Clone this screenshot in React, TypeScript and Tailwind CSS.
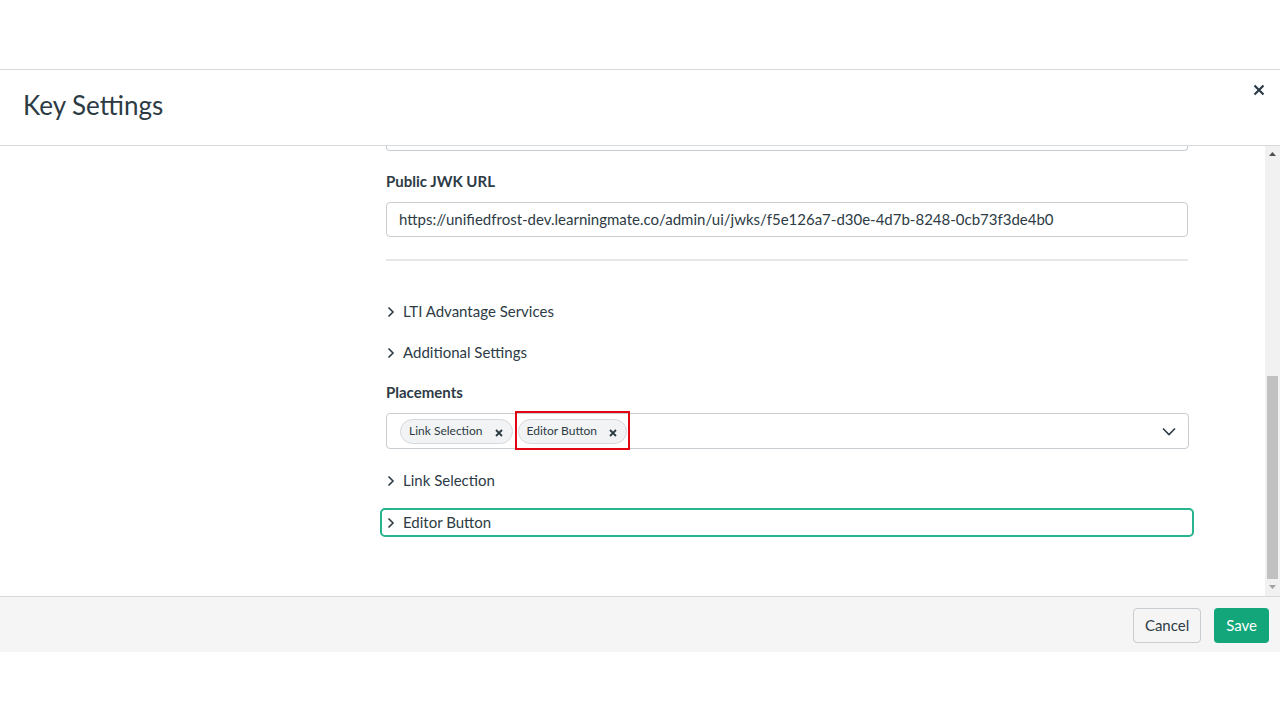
import { ReactNode } from 'react'

// Small right-pointing chevron used by the collapsible rows
function ChevronRight() {
  return (
    <svg width="8" height="12" viewBox="0 0 8 12" className="shrink-0" aria-hidden="true">
      <path d="M1.5 1.5 L6 6 L1.5 10.5" fill="none" stroke="#2d3b45" strokeWidth="1.6" />
    </svg>
  )
}

function ChipX() {
  return (
    <svg width="8" height="8" viewBox="0 0 8 8" aria-hidden="true">
      <path d="M1 1 L7 7 M7 1 L1 7" stroke="#2d3b45" strokeWidth="1.8" />
    </svg>
  )
}

function Chip({ label }: { label: string }) {
  return (
    <span className="flex h-[25px] items-center gap-[12px] rounded-full border border-[#d5d9dc] bg-[#f2f3f4] pl-[8px] pr-[9px] text-[12px] text-[#2d3b45]">
      {label}
      <span className="mt-[3px]">
        <ChipX />
      </span>
    </span>
  )
}

function Toggle({ label, focused }: { label: string; focused?: boolean }) {
  return (
    <div
      className={
        focused
          ? '-mx-[6px] flex h-[29px] items-center gap-[8px] rounded-[5px] border-2 border-[#27b48e] px-[5px] text-[15px] text-[#2d3b45]'
          : 'flex h-[29px] items-center gap-[8px] px-px text-[15px] text-[#2d3b45]'
      }
    >
      <ChevronRight />
      {label}
    </div>
  )
}

function Label({ children }: { children: ReactNode }) {
  return <div className="text-[15px] font-bold leading-[20px] text-[#2d3b45]">{children}</div>
}

export default function App() {
  return (
    <div className="flex h-[720px] w-[1280px] flex-col bg-white font-['Lato',sans-serif] text-[#2d3b45]">
      <div className="h-[69px] shrink-0" />

      {/* Modal header */}
      <div className="flex h-[77px] shrink-0 items-start justify-between border-y border-[#d7dadc]">
        <h1 className="ml-[23px] mt-[19px] text-[26px] leading-[32px] text-[#2d3b45]">Key Settings</h1>
        <button className="mr-[15px] mt-[14px]" aria-label="Close">
          <svg width="12" height="12" viewBox="0 0 12 12">
            <path d="M1.5 1.5 L10.5 10.5 M10.5 1.5 L1.5 10.5" stroke="#2d3b45" strokeWidth="2.2" />
          </svg>
        </button>
      </div>

      {/* Scrolling body */}
      <div className="flex h-[450px] shrink-0">
        <div className="flex-1 overflow-hidden">
          <div className="ml-[386px] w-[802px]">
            <div className="h-[5px] rounded-b-[4px] border-x border-b border-[#c7cdd1]" />

            <div className="mt-[20px]">
              <Label>Public JWK URL</Label>
            </div>
            <div className="mt-[11px] flex h-[35px] items-center rounded-[4px] border border-[#c7cdd1] px-[12px] text-[15px]">
              https://unifiedfrost-dev.learningmate.co/admin/ui/jwks/f5e126a7-d30e-4d7b-8248-0cb73f3de4b0
            </div>

            <div className="mt-[22px] h-[2px] bg-[#e5e7e9]" />

            <div className="mt-[36px] flex flex-col gap-[12px]">
              <Toggle label="LTI Advantage Services" />
              <Toggle label="Additional Settings" />
            </div>

            <div className="mt-[15px]">
              <Label>Placements</Label>
            </div>
            <div className="mt-[11px] flex h-[36px] w-[803px] items-center rounded-[4px] border border-[#c7cdd1] pl-[13px] pr-[12px]">
              <div className="flex items-center gap-[5px]">
                <Chip label="Link Selection" />
                <div className="relative">
                  <Chip label="Editor Button" />
                  <div className="absolute -bottom-[6px] -left-[3px] -right-[3px] -top-[8px] border-2 border-[#e30613]" />
                </div>
              </div>
              <svg width="14" height="9" viewBox="0 0 14 9" className="ml-auto" aria-hidden="true">
                <path d="M1 1.5 L7 7.5 L13 1.5" fill="none" stroke="#2d3b45" strokeWidth="1.6" />
              </svg>
            </div>

            <div className="mt-[17px] flex flex-col gap-[13px]">
              <Toggle label="Link Selection" />
              <Toggle label="Editor Button" focused />
            </div>
          </div>
        </div>

        {/* Scrollbar */}
        <div className="flex w-[15px] shrink-0 flex-col bg-[#f1f1f1]">
          <div className="flex h-[15px] items-center justify-center">
            <svg width="7" height="4" viewBox="0 0 7 4">
              <path d="M0 4 L3.5 0 L7 4 Z" fill="#505050" />
            </svg>
          </div>
          <div className="mx-[2px] mt-[215px] h-[203px] bg-[#c1c1c1]" />
          <div className="flex h-[15px] items-center justify-center">
            <svg width="7" height="4" viewBox="0 0 7 4">
              <path d="M0 0 L3.5 4 L7 0 Z" fill="#a3a3a3" />
            </svg>
          </div>
        </div>
      </div>

      {/* Footer */}
      <div className="flex h-[56px] shrink-0 items-start justify-end gap-[13px] border-t border-[#d7dadc] bg-[#f5f5f5] pr-[11px] pt-[11px]">
        <button className="h-[35px] rounded-[4px] border border-[#c7cdd1] bg-[#f5f5f5] px-[11px] text-[15px] text-[#2d3b45]">
          Cancel
        </button>
        <button className="h-[35px] rounded-[4px] bg-[#13a67a] px-[12px] text-[15px] text-white">Save</button>
      </div>

      <div className="flex-1" />
    </div>
  )
}
